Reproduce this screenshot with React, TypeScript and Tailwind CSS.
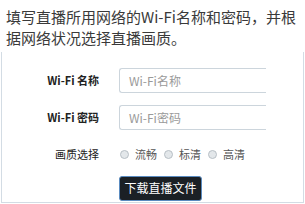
const font = { fontFamily: '"Noto Sans CJK SC", "Noto Sans", sans-serif' };

const Label = ({ children, bold = true }: { children: React.ReactNode; bold?: boolean }) => (
  <div className={`w-[117px] shrink-0 pr-[20px] text-right text-[11px] text-[#222] ${bold ? "font-bold" : ""}`}>{children}</div>
);

export default function App() {
  const qualities = ["流畅", "标清", "高清"];
  return (
    <div className="h-[204px] w-[305px] overflow-hidden bg-white" style={font}>
      <div className="whitespace-nowrap pl-[6px] pt-[6px] text-[15px] leading-[21px] text-[#3a3a3a]">
        <div>填写直播所用网络的Wi-Fi名称和密码，并根</div>
        <div>据网络状况选择直播画质。</div>
      </div>

      <div className="mx-[1px] mt-[4px] h-[151px] border border-t-0 border-[#d3dce4] pt-[16px]">
        <div className="flex h-[25px] items-center">
          <Label>Wi-Fi 名称</Label>
          <div className="h-[25px] w-[147px] rounded-l-[3px] border border-r-0 border-[#ccd5dc] pl-[9px] text-[12px] leading-[23px] text-[#9a9a9a]">
            Wi-Fi名称
          </div>
        </div>

        <div className="mt-[12px] flex h-[25px] items-center">
          <Label>Wi-Fi 密码</Label>
          <div className="h-[25px] w-[147px] rounded-l-[3px] border border-r-0 border-[#ccd5dc] pl-[9px] text-[12px] leading-[23px] text-[#9a9a9a]">
            Wi-Fi密码
          </div>
        </div>

        <div className="mt-[13px] flex h-[22px] items-center">
          <Label bold={false}>画质选择</Label>
          <div className="flex items-center gap-[4px] pl-[1px] text-[11px] text-[#555]">
            {qualities.map((q) => (
              <div key={q} className="flex items-center gap-[6px] pr-[3px]">
                <span className="h-[9px] w-[9px] rounded-full border border-[#b8c0c6] bg-[#e3e7ea]" />
                <span>{q}</span>
              </div>
            ))}
          </div>
        </div>

        <div className="mt-[9px] pl-[117px]">
          <button className="h-[25px] w-[83px] rounded-[3px] border border-[#5a8bc0] bg-[#1b2025] text-[12px] text-white">
            下载直播文件
          </button>
        </div>
      </div>
    </div>
  );
}
